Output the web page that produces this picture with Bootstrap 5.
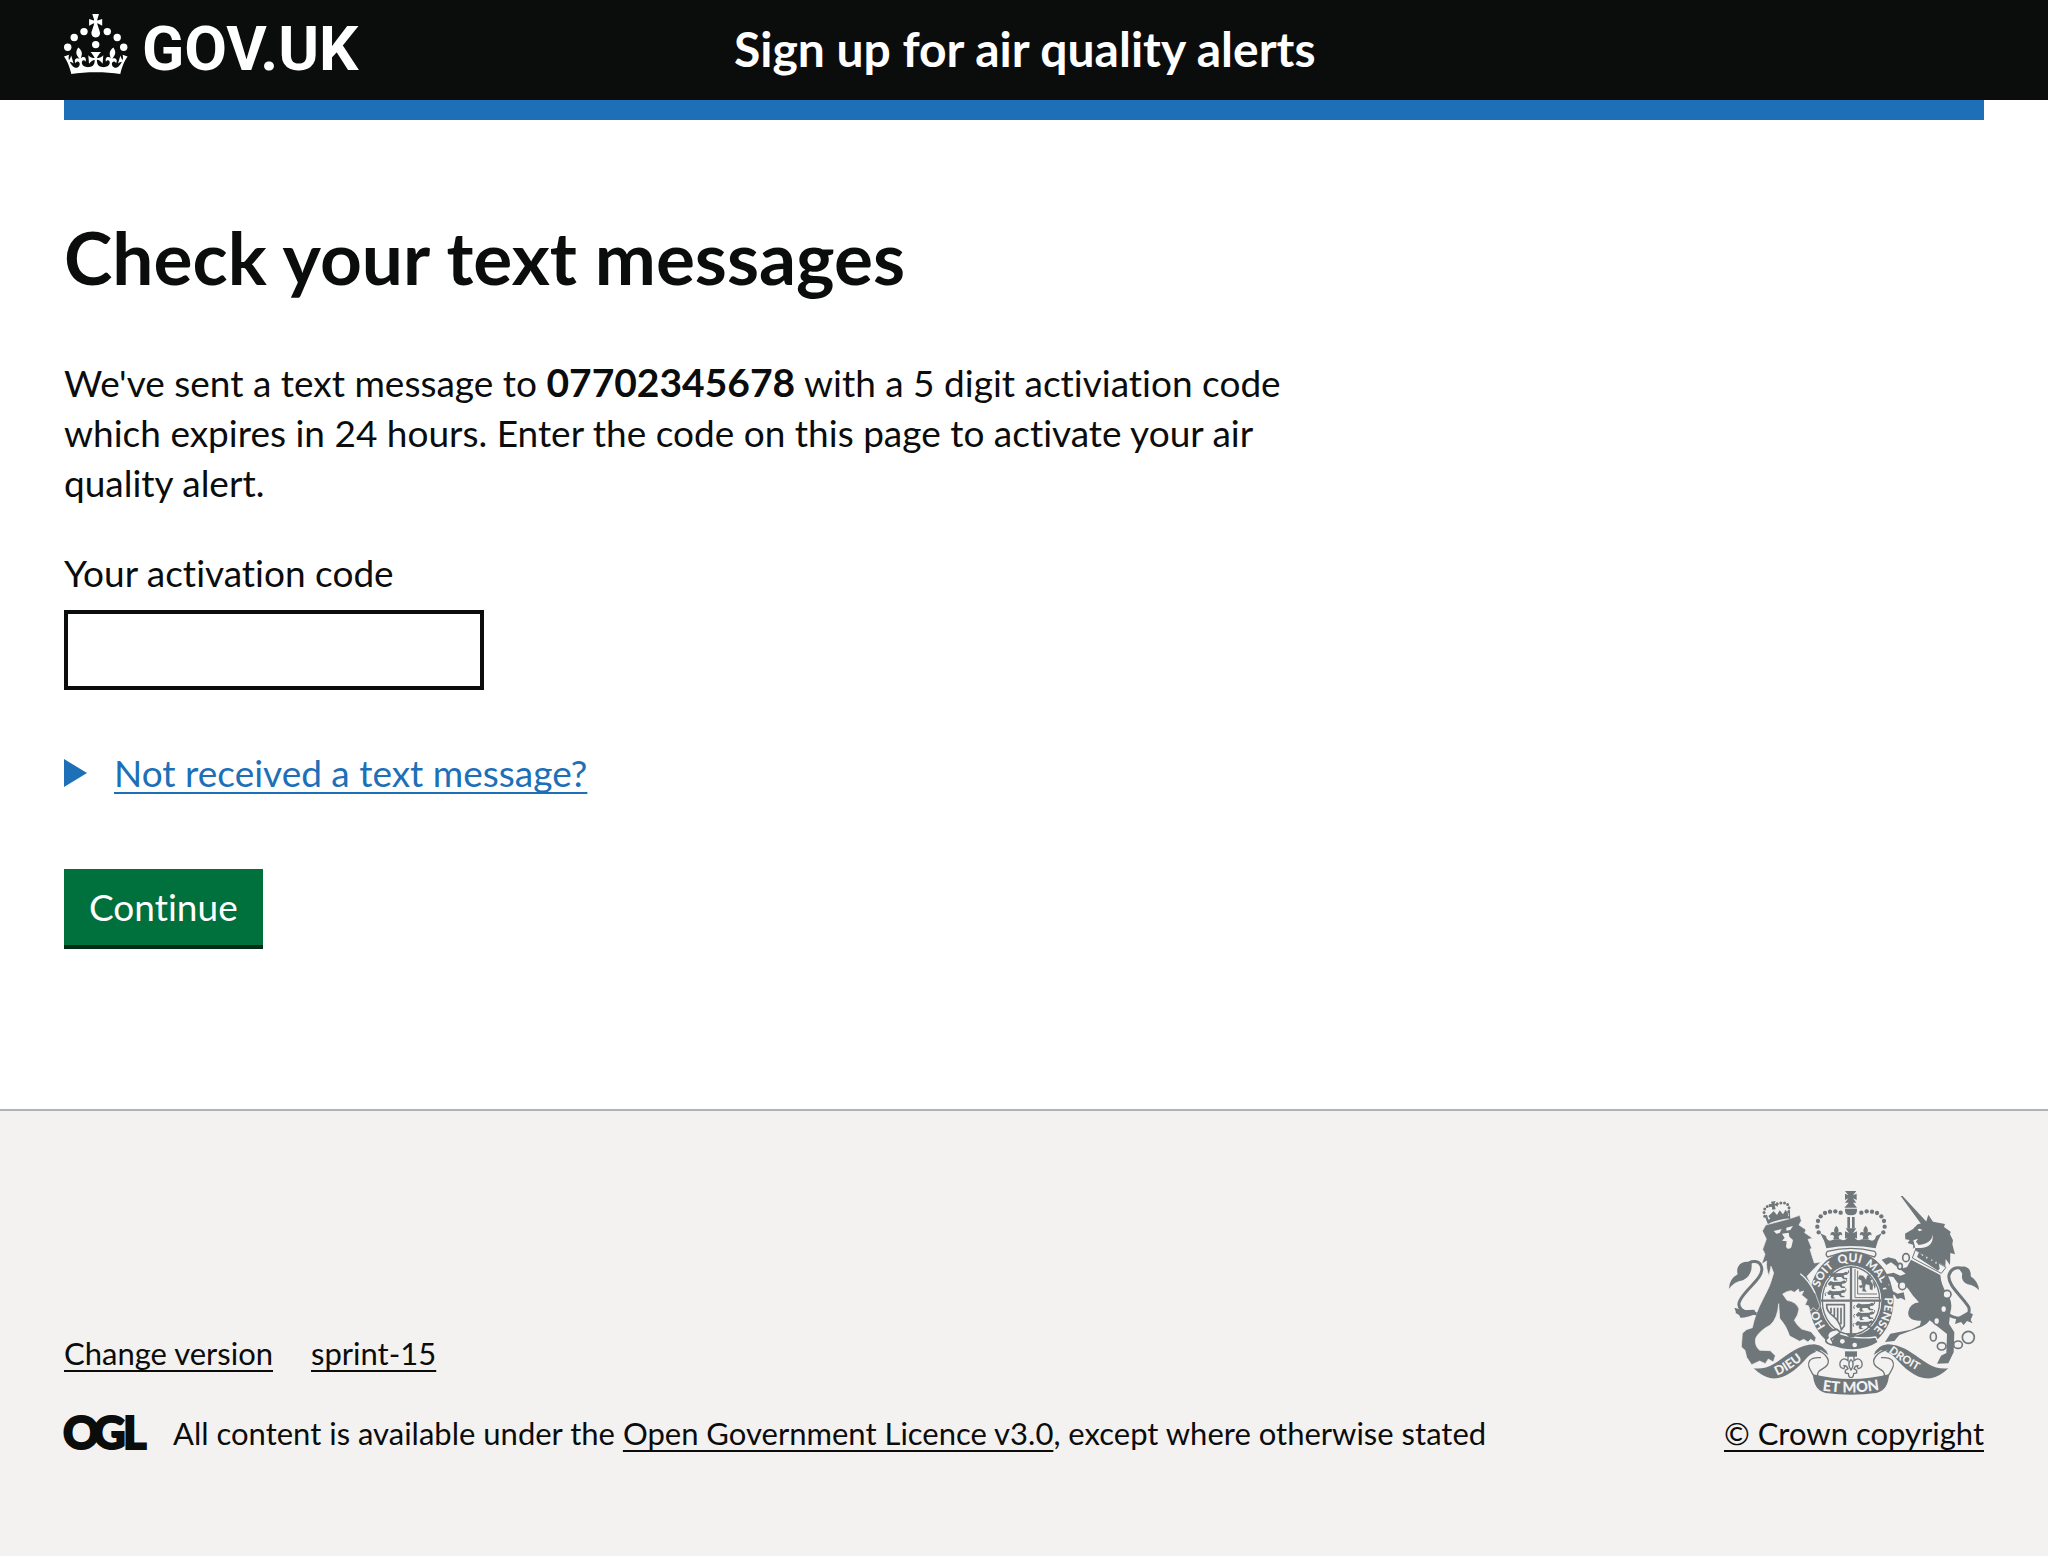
<!DOCTYPE html>
<html lang="en">
<head>
<meta charset="utf-8">
<meta name="viewport" content="width=device-width, initial-scale=1">
<title>Check your text messages - GOV.UK</title>
<link href="https://cdn.jsdelivr.net/npm/bootstrap@5.3.0/dist/css/bootstrap.min.css" rel="stylesheet">
<style>
  body { font-family: Lato, "Liberation Sans", sans-serif; font-size: 37px; line-height: 50px; color: #0b0c0c; }
  body, button { font-variant-ligatures: none; }
  .page-width { padding-left: 64px; padding-right: 64px; }
  .site-header { background: #0b0c0c; padding-top: 14px; padding-bottom: 16px; }
  .site-header a { color: #fff; text-decoration: none; }
  .wordmark { font: 700 62px/70px Roboto, sans-serif; margin-left: 14px; }
  .service-name { font-size: 48px; line-height: 70px; font-weight: 700; padding-left: 30px; }
  .blue-bar { height: 20px; background: #1d70b8; }
  main { padding-top: 96px; padding-bottom: 160px; }
  h1.page-title { font-size: 73px; line-height: 82px; font-weight: 700; margin-bottom: 60px; }
  .body-text { margin-bottom: 40px; padding-right: 20px; }
  .body-text strong { font-size: 39px; line-height: 40px; }
  .code-label { margin-bottom: 12px; }
  .code-input { width: 420px; height: 80px; border: 4px solid #0b0c0c; border-radius: 0; font-size: 37px; }
  .help { margin-top: 58px; margin-bottom: 71px; }
  .help summary { list-style: none; color: #1d70b8; gap: 27px; width: fit-content; }
  .help summary span, .site-footer a { text-decoration: underline 2px; text-underline-offset: 5px; text-decoration-skip-ink: none; }
  .btn-go { font-size: 37px; line-height: 50px; padding: 13px 25px; color: #fff; background: #00703c; border: 0; border-bottom: 4px solid #002d18; border-radius: 0; }
  .btn-go:hover { background: #005a30; color: #fff; }
  .site-footer { background: #f3f2f1; border-top: 2px solid #b1b4b6; padding-top: 80px; padding-bottom: 80px; font-size: 31px; line-height: 40px; }
  .site-footer a { color: #0b0c0c; }
  .meta-links { gap: 38px; margin-bottom: 40px; }
  .licence { gap: 27px; }
  .ogl { overflow: visible; }
  .arms { margin-bottom: 18px; }
  .arms text { font-family: Lato, sans-serif; font-weight: 900; fill: #f3f2f1; }
</style>
<script src="https://cdn.jsdelivr.net/npm/bootstrap@5.3.0/dist/js/bootstrap.bundle.min.js"></script>
</head>
<body class="d-flex flex-column min-vh-100">

<header class="site-header page-width">
  <div class="row g-0">
    <div class="col-4">
      <a href="#" class="d-flex align-items-start" aria-label="GOV.UK">
        <svg width="64" height="60" viewBox="0 0 64 60" fill="#fff" aria-hidden="true">
          <circle cx="20" cy="17.6" r="3.7"/><circle cx="10.2" cy="23.5" r="3.7"/><circle cx="3.7" cy="33.2" r="3.7"/>
          <circle cx="31.7" cy="30.6" r="3.7"/><circle cx="43.3" cy="17.6" r="3.7"/><circle cx="53.2" cy="23.5" r="3.7"/><circle cx="59.7" cy="33.2" r="3.7"/>
          <path d="M33.1,9.8c.2-.1.3-.3.5-.5l4.6,2.4v-6.8l-4.6,1.5c-.1-.2-.3-.3-.5-.5l1.9-5.9h-6.7l1.9,5.9c-.2.1-.3.3-.5.5l-4.6-1.5v6.8l4.6-2.4c.1.2.3.3.5.5l-2.6,8c-.9,2.8,1.2,5.7,4.1,5.7h0c3,0,5.1-2.9,4.1-5.7l-2.6-8ZM37,37.9s-3.4,3.8-4.1,6.1c2.2,0,4.2-.5,6.4-2.8l-.7,8.5c-2-2.8-4.4-4.1-5.7-3.8.1,3.1.5,6.7,5.8,7.2,3.7.3,6.7-1.5,7-3.8.4-2.6-2-4.3-3.7-1.6-1.4-4.5,2.4-6.1,4.9-3.2-1.9-4.5-1.8-7.7,2.4-10.9,3,4,2.6,7.3-1.2,11.1,2.4-1.3,6.2,0,4,4.6-1.2-2.8-3.7-2.2-4.2.2-.3,1.7.7,3.7,3,4.2,1.9.3,4.7-.9,7-5.9-1.3,0-2.4.7-3.9,1.7l2.4-8c.6,2.3,1.4,3.7,2.2,4.5.6-1.6.5-2.8,0-5.3l5,1.8c-2.6,3.6-5.2,8.7-7.3,17.5-7.4-1.1-15.7-1.7-24.5-1.7h0c-8.8,0-17.1.6-24.5,1.7-2.1-8.9-4.7-13.9-7.3-17.5l5-1.8c-.5,2.5-.6,3.7,0,5.3.8-.8,1.6-2.3,2.2-4.5l2.4,8c-1.5-1-2.6-1.7-3.9-1.7,2.3,5,5.2,6.2,7,5.9,2.3-.4,3.3-2.4,3-4.2-.5-2.4-3-3.1-4.2-.2-2.2-4.6,1.6-6,4-4.6-3.7-3.7-4.2-7.1-1.2-11.1,4.2,3.2,4.3,6.4,2.4,10.9,2.5-2.8,6.3-1.3,4.9,3.2-1.8-2.7-4.1-1-3.7,1.6.3,2.3,3.3,4.1,7,3.8,5.4-.5,5.7-4.2,5.8-7.2-1.3-.2-3.7,1-5.7,3.8l-.7-8.5c2.2,2.3,4.2,2.7,6.4,2.8-.7-2.3-4.1-6.1-4.1-6.1h10.6,0Z"/>
        </svg>
        <span class="wordmark">GOV.UK</span>
      </a>
    </div>
    <div class="col-8"><a href="#" class="service-name d-block">Sign up for air quality alerts</a></div>
  </div>
</header>
<div class="page-width"><div class="blue-bar"></div></div>

<main class="page-width">
  <div class="row g-0">
    <div class="col-8">
      <h1 class="page-title">Check your text messages</h1>
      <p class="body-text">We've sent a text message to <strong>07702345678</strong> with a 5 digit activiation code which expires in 24 hours. Enter the code on this page to activate your air quality alert.</p>
      <form>
        <label class="code-label d-block" for="code">Your activation code</label>
        <input class="code-input form-control" id="code" type="text" inputmode="numeric">
        <details class="help">
          <summary class="d-flex align-items-center">
            <svg width="23" height="28" viewBox="0 0 23 28" aria-hidden="true"><path d="M0 0L23 14L0 28Z" fill="#1d70b8"/></svg>
            <span>Not received a text message?</span>
          </summary>
        </details>
        <button class="btn btn-go" type="button">Continue</button>
      </form>
    </div>
  </div>
</main>

<footer class="site-footer page-width flex-grow-1">
  <div class="d-flex justify-content-between align-items-end">
    <div>
      <div class="meta-links d-flex"><a href="#">Change version</a><a href="#">sprint-15</a></div>
      <div class="licence d-flex align-items-center">
        <svg class="ogl" width="82" height="34" viewBox="0 0 82 34" role="img" aria-label="Open Government Licence" font-family="Lato, sans-serif" font-weight="900" font-size="45" fill="#0b0c0c" stroke="#0b0c0c" stroke-width="2">
          <text x="-1" y="33">O</text><text x="29" y="33">G</text><text x="59" y="33">L</text>
        </svg>
        <span>All content is available under the <a href="#">Open Government Licence v3.0</a>, except where otherwise stated</span>
      </div>
    </div>
    <div class="text-center">
      <svg class="arms d-block mx-auto" width="250" height="204" viewBox="54 36 750 612" fill="#6f777b" role="img" aria-label="Royal coat of arms">
        <defs>
          <path id="garter" d="M420 481C364 481 319 429 319 365C319 301 364 249 420 249C476 249 521 301 521 365C521 429 476 481 420 481"/>
          <path id="ribL" d="M198 590Q238 575 296 524"/>
          <path id="ribR" d="M532 519Q584 558 654 593"/>
          <path id="ribC" d="M334 634Q420 648 512 631"/>
          <g id="walker"><path d="M-30 -4l8-8 10 3 22-1 10-4 6 5-4 4-10 2 2 7 9 1-1 4-11 0-6-7-14 0-2 6 7 4-12 1-3-6 2-6-8 1z"/><path d="M16-10q14 4 10-8M-32-6l-4 4 2 7" fill="none" stroke="#6f777b" stroke-width="3"/></g>
          <g id="fleur"><path d="M0-17C9-7 8 0 3 7C10-2 20 3 17 13Q13 7 7 15L9 24H-9L-7 15Q-13 7-17 13C-20 3-10-2-3 7C-8 0-9-7 0-17Z"/></g>
        </defs>

        <!-- large crown -->
        <path d="M402 36h34l-10 13 11-5v19l-11-5 10 13h-34l10-13-10 5V44l10 5zM416 68h8l14 18h-38zM402 89h36q2 20-18 20t-18-20zM409 114h8v34h-8zM423 114h8v34h-8z"/>
        <g>
          <circle cx="323" cy="160" r="6.500"/><circle cx="319" cy="143" r="6.500"/><circle cx="321" cy="126" r="6.500"/><circle cx="329" cy="112" r="6.500"/><circle cx="342" cy="102" r="6.500"/><circle cx="357" cy="98" r="6.500"/><circle cx="373" cy="97" r="6.500"/><circle cx="389" cy="101" r="6.500"/>
          <circle cx="517" cy="160" r="6.500"/><circle cx="521" cy="143" r="6.500"/><circle cx="519" cy="126" r="6.500"/><circle cx="511" cy="112" r="6.500"/><circle cx="498" cy="102" r="6.500"/><circle cx="483" cy="98" r="6.500"/><circle cx="467" cy="97" r="6.500"/><circle cx="451" cy="101" r="6.500"/>
        </g>
        <path d="M328 163L345 171Q347 184 357 185L371 181H387L396 184Q406 184 409 174H431Q434 184 444 184L453 181H469L483 185Q493 184 495 171L512 163Q499 185 494 208Q420 194 346 208Q341 185 328 163Z"/>
        <use href="#fleur" x="376" y="157"/><use href="#fleur" x="464" y="157"/>
        <path d="M404 148h32l-10 14 12-5v22l-8-4v10h-20v-10l-8 4v-22l12 5z"/>

        <!-- garter and shield -->
        <ellipse cx="421" cy="365" rx="127" ry="148"/>
        <path d="M349 217Q420 199 491 217Q499 226 490 234L474 229Q420 207 366 229L350 234Q341 226 349 217Z" fill="#f3f2f1" stroke="#6f777b" stroke-width="4"/>
        <ellipse cx="420" cy="365" rx="91" ry="106" fill="#f3f2f1"/>
        <ellipse cx="420" cy="365" rx="86" ry="101" fill="none" stroke="#6f777b" stroke-width="4"/>
        <path d="M420 262v208M330 365h180" stroke="#6f777b" stroke-width="7"/>
        <path d="M432 270v86h72M440 275v70h58" fill="none" stroke="#6f777b" stroke-width="3"/>
        <use href="#walker" x="386" y="292"/><use href="#walker" x="380" y="318"/><use href="#walker" x="378" y="346"/>
        <use href="#walker" x="464" y="385"/><use href="#walker" x="464" y="411"/><use href="#walker" x="462" y="438"/>
        <path d="M446 289l11 2 8 12 4-13 10-3-3 8 8 5-6 5 8 12-2 16-7-2-1-13-12-3-3 13 5 10-12-2 2-11-8 2-4-6 10-3-3-14-10-5zM484 305q14 10 7 24" stroke="#6f777b" stroke-width="1"/>
        <path d="M347 377H400V440L391 452Q385 425 365 410Q345 395 347 377ZM360 386v16M370 386v26M380 386v38M390 386v50" fill="none" stroke="#6f777b" stroke-width="5"/>
        <text font-size="34"><textPath href="#garter" startOffset="88">HO</textPath></text>
        <text font-size="34"><textPath href="#garter" startOffset="210">SOIT</textPath></text>
        <text font-size="36"><textPath href="#garter" startOffset="304">QUI</textPath></text>
        <text font-size="34"><textPath href="#garter" startOffset="384">MAL</textPath></text>
        <text font-size="28"><textPath href="#garter" startOffset="467">Y</textPath></text>
        <text font-size="34"><textPath href="#garter" startOffset="502">PENSE</textPath></text>
        <path d="M372 458Q430 484 494 474L502 490Q440 530 358 500Z" stroke="#f3f2f1" stroke-width="4"/>
        <path d="M378 451Q344 455 351 476Q334 488 360 497Q372 497 360 480Q375 470 388 460Z" fill="#f3f2f1" stroke="#6f777b" stroke-width="5"/>
        <circle cx="394" cy="487" r="7" fill="#f3f2f1"/><circle cx="431" cy="498" r="7" fill="#f3f2f1"/>
        <path d="M403 463h36l-10 12h-15z"/>

        <!-- lion -->
        <g stroke="#f3f2f1" stroke-width="2">
          <path d="M154 156L164 138L240 118L266 109L271 125L264 138L285 152L281 161L305 178L291 181L302 207L297 211Q304 235 310 252L330 249L312 266L288 292Q302 318 314 345L327 382L319 396L306 386L299 396L292 380L282 378L289 362L272 348L278 336L265 340L262 330L250 340L240 335L228 338L215 345L228 364Q256 368 264 390Q262 408 250 424Q258 440 272 450L300 458L315 476L311 489L299 481L291 489L278 481L266 487L236 471Q226 440 206 418L203 374Q200 418 178 438Q145 455 134 478Q130 500 146 514L178 515L193 530L187 549L172 540L163 554L146 546L122 557L107 535L102 514L91 504L94 463L106 452L124 446Q132 405 158 356Q178 322 188 282L180 262L174 291Q164 265 167 246L152 255L162 226L155 211L166 180Z"/>
        </g>
        <path d="M188 156l24-6-6 12-10 2zM226 146l20-5-8 12-12 2zM213 164l20-3 2 12 11 10-5 22q-10 10-16-2l2-16-14-2 8-8z" fill="#f3f2f1"/>
        <path d="M268 284Q294 304 312 342" fill="none" stroke="#f3f2f1" stroke-width="4"/>
        <path d="M160 107L172 122Q204 105 236 112L237 118Q203 120 170 134Z"/>
        <path d="M174 134L166 108M236 120L234 92" stroke="#6f777b" stroke-width="4"/>
        <path d="M180 68l14-2-4 8 9 0 2 9-10-4 3 12-10 1-2-11-8 4-1-9 9-1zM180 104l8-8 10 12 8-14 10 12 8-14 8 13-2 8q-26-2-50 10l-8-12z"/>
        <g fill="none" stroke="#6f777b" stroke-width="9" stroke-linecap="round" stroke-dasharray="0 11"><path d="M161 112C155 88 165 81 182 79M233 98C239 74 222 66 196 75"/></g>
        <path d="M137 404C92 402 75 385 88 362C108 326 158 296 152 266C148 245 122 240 104 260" fill="none" stroke="#6f777b" stroke-width="9"/>
        <path d="M122 252C98 240 72 258 80 286Q54 300 54 330Q69 308 96 304Q120 292 122 264ZM70 386Q78 405 72 402Q86 405 88 416Q102 418 136 404L130 392L96 394Z"/>

        <!-- unicorn -->
        <path d="M569 51L575 51L650 132L633 139Z"/>
        <path d="M582 164L606 150L620 136L645 130L652 107L666 128L702 135L699 144L719 158L717 166L726 184L724 196L732 226L718 222L717 258L704 240L703 262L612 214L613 204L607 209L606 197L590 192L596 183L583 181Z"/>
        <path d="M620 151q8-5 14 3l-10 3zM607 184l14-5-6 9 8 10q40-4 42-32 4 38-34 41l-18 0z" fill="#f3f2f1"/>
        <path d="M613 213L705 265L691 283L604 237Z" fill="#f3f2f1" stroke="#6f777b" stroke-width="3"/>
        <path d="M618 234l7-17 9 14 8-6 5 15 10-12 4 18 10-6 3 15 9-6 3 20-5 6z"/>
        <path d="M600 242L688 288Q690 315 706 342Q728 368 718 400L714 434L730 460L728 520L712 553L678 554L690 530L706 522L708 465L656 424Q648 436 630 444L565 468L550 486L522 489L538 464L600 452L627 439L630 425Q588 425 592 398Q596 374 624 370Q604 350 592 330L576 315L560 312L547 294L531 292L529 312L543 335L560 344L578 340L583 364L570 357L558 360L551 349L535 343L514 310L524 286L548 281L568 290L584 284L556 262L540 250L526 258L512 242L532 235L553 240L576 268L588 264Z"/>
        <path d="M709 405C750 430 782 413 773 384C752 350 708 318 714 288C720 266 746 258 764 276" fill="none" stroke="#6f777b" stroke-width="9"/>
        <path d="M742 266C765 255 782 270 779 292Q803 308 804 334Q790 319 770 316Q748 306 754 284ZM736 418L770 398L786 406L779 423L785 433L768 426L758 438L750 429L732 435Z"/>
        <g fill="#f3f2f1" stroke="#6f777b" stroke-width="5">
          <ellipse cx="585" cy="236" rx="10" ry="12"/><ellipse cx="567" cy="262" rx="7" ry="9"/><ellipse cx="574" cy="320" rx="11" ry="12"/><circle cx="708" cy="346" r="12"/><ellipse cx="698" cy="390" rx="9" ry="11"/><ellipse cx="677" cy="426" rx="9" ry="11"/><ellipse cx="667" cy="473" rx="9" ry="13"/><ellipse cx="692" cy="502" rx="13" ry="11"/><ellipse cx="741" cy="497" rx="13" ry="11"/><circle cx="772" cy="475" r="18"/>
        </g>

        <!-- motto ribbon -->
        <g id="side">
          <path d="M128 568Q160 572 188 555C230 530 258 498 310 496Q340 498 352 528L330 514Q304 520 290 534C258 569 225 602 180 598Q152 592 128 568Z"/>
          <path d="M310 512C340 518 358 540 350 556C342 572 316 570 320 592L332 602L310 594C300 575 286 560 296 545Q304 534 330 536" fill="#f3f2f1" stroke="#6f777b" stroke-width="4"/>
        </g>
        <use href="#side" transform="translate(840 0) scale(-1 1)"/>
        <path d="M306 586Q420 614 534 586Q532 634 496 642Q420 652 344 642Q308 634 306 586Z"/>
        <text font-size="38"><textPath href="#ribL">DIEU</textPath></text>
        <text font-size="33"><textPath href="#ribR">DROIT</textPath></text>
        <text font-size="44"><textPath href="#ribC">ET MON</textPath></text>
        <path d="M402 517h36v16h-36z"/>
        <path d="M411 531h18v14q14-12 23 3 6 17-10 21-5-4-1-9-8-1-12 9l8 5v8l-9 2q-1 12-8 12t-8-12l-9-2v-8l8-5q-4-10-12-9 4 5-1 9-16-4-10-21 9-15 23-3zM420 541q-13 14 0 32 13-18 0-32" fill="#f3f2f1" stroke="#6f777b" stroke-width="4"/>
      </svg>
      <a href="#">© Crown copyright</a>
    </div>
  </div>
</footer>
</body>
</html>
